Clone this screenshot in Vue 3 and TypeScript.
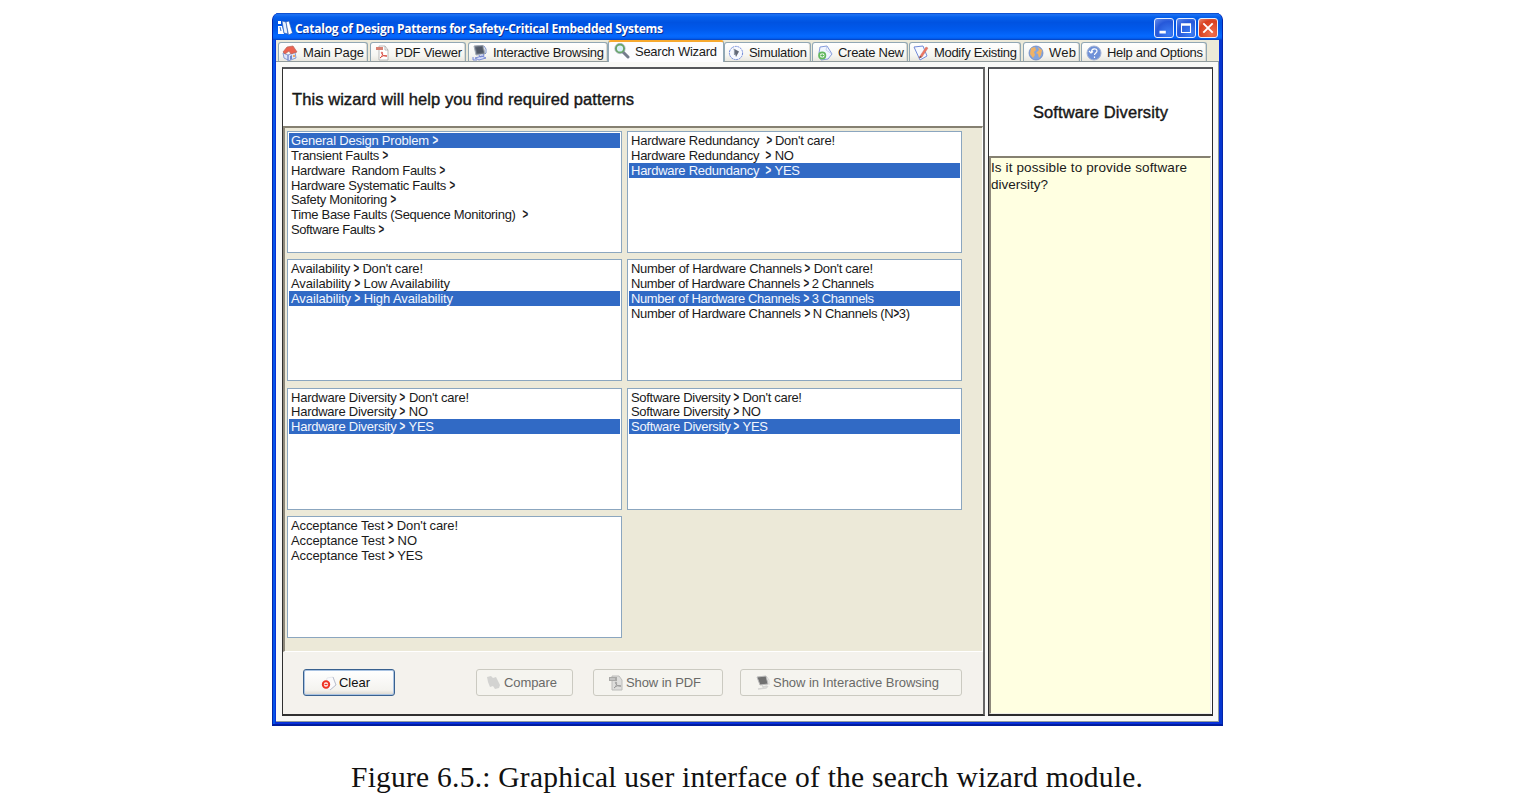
<script setup lang="ts">
interface Tab { label: string; icon: string; box: number; text: number; gap: number }
interface Row { text: string; w: number }
interface Choice { rows: Row[]; selected: number }

const tabs: Tab[] = [
  { label: 'Main Page', icon: 'home', box: 90, text: 61, gap: 2 },
  { label: 'PDF Viewer', icon: 'pdf', box: 96, text: 67, gap: 2 },
  { label: 'Interactive Browsing', icon: 'computer', box: 140, text: 111, gap: 0 },
  { label: 'Search Wizard', icon: 'search', box: 116, text: 82, gap: 0 },
  { label: 'Simulation', icon: 'play', box: 87, text: 58, gap: 1 },
  { label: 'Create New', icon: 'create', box: 96, text: 66, gap: 1 },
  { label: 'Modify Existing', icon: 'edit', box: 112, text: 83, gap: 2 },
  { label: 'Web', icon: 'web', box: 57, text: 27, gap: 1 },
  { label: 'Help and Options', icon: 'help', box: 126, text: 96, gap: 0 },
]

const row = (text: string, w: number): Row => ({ text, w })

const lists: Choice[] = [
  { selected: 0, rows: [row('General Design Problem >', 147), row('Transient Faults >', 97), row('Hardware  Random Faults >', 154), row('Hardware Systematic Faults >', 164), row('Safety Monitoring >', 105), row('Time Base Faults (Sequence Monitoring)  >', 237), row('Software Faults >', 93)] },
  { selected: 2, rows: [row("Hardware Redundancy  > Don't care!", 204), row('Hardware Redundancy  > NO', 163), row('Hardware Redundancy  > YES', 169)] },
  { selected: 2, rows: [row("Availability > Don't care!", 132), row('Availability > Low Availability', 159), row('Availability > High Availability', 162)] },
  { selected: 2, rows: [row("Number of Hardware Channels > Don't care!", 242), row('Number of Hardware Channels > 2 Channels', 243), row('Number of Hardware Channels > 3 Channels', 243), row('Number of Hardware Channels > N Channels (N>3)', 279)] },
  { selected: 2, rows: [row("Hardware Diversity > Don't care!", 178), row('Hardware Diversity > NO', 137), row('Hardware Diversity > YES', 143)] },
  { selected: 2, rows: [row("Software Diversity > Don't care!", 171), row('Software Diversity > NO', 130), row('Software Diversity > YES', 137)] },
  { selected: -1, rows: [row("Acceptance Test > Don't care!", 167), row('Acceptance Test > NO', 126), row('Acceptance Test > YES', 132)] },
]

const split = (text: string): string[] => text.split(/(>)/).filter((s) => s.length > 0)

// Adjusts tracking so that a label occupies the given width.
const vFit = {
  mounted(el: HTMLElement, binding: { value: number }) {
    const natural = el.getBoundingClientRect().width
    const count = (el.textContent ?? '').length
    if (count > 1) el.style.letterSpacing = `${(binding.value - natural) / (count - 1)}px`
  },
}
</script>

<template>
  <main class="page">
    <section class="window">
      <header class="titlebar">
        <svg class="app-icon" viewBox="0 0 16 16">
          <path d="M1 1h3v3H1zM1 6h4l2 8H1z" fill="#fff" />
          <path d="M5 1l4 1 2 12-4-1z" fill="#e8f2ff" stroke="#2757b0" stroke-width=".6" />
          <path d="M9 2l3-1 3.5 12-4 2z" fill="#fff" stroke="#2757b0" stroke-width=".6" />
          <path d="M3 7l1 4" stroke="#3a72c8" stroke-width="1" />
        </svg>
        <h1><span v-fit="368">Catalog of Design Patterns for Safety-Critical Embedded Systems</span></h1>
        <div class="controls">
          <button class="ctl"><svg viewBox="0 0 20 20"><path d="M5 13h7v3H5z" fill="#fff" /></svg></button>
          <button class="ctl"><svg viewBox="0 0 20 20"><path d="M5 6.5h10v8.5H5z" fill="none" stroke="#fff" stroke-width="1.2" /><path d="M4.4 4.7h11.2v2.6H4.4z" fill="#fff" /></svg></button>
          <button class="ctl close"><svg viewBox="0 0 20 20"><path d="M4.8 4.8l10.4 10.4M15.2 4.8L4.8 15.2" stroke="#fff" stroke-width="2.1" /></svg></button>
        </div>
      </header>

      <div class="client">
        <nav class="tabs">
          <div v-for="tab in tabs" :key="tab.label" class="tab" :class="{ active: tab.icon === 'search' }" :style="{ width: tab.box + 'px', marginRight: tab.gap + 'px' }">
            <svg class="icon" viewBox="0 0 16 16" fill="none">
              <g v-if="tab.icon === 'home'">
                <path d="M1 8l5 2v5l-4-2zM6 10l7-3 1 6-8 3z" fill="#dfe6fa" stroke="#7186c8" stroke-width=".8" />
                <path d="M1 7l4-5 6-1 4 6-6 2-2-3-4 3z" fill="#ec6350" stroke="#b5665c" stroke-width=".7" />
                <path d="M8 11l2-1v4l-2 1z" fill="#7388c8" /><path d="M11 10h2v2h-2z" fill="#f2aa61" />
              </g>
              <g v-else-if="tab.icon === 'pdf'">
                <path d="M5 1h6l3 4v10H5z" fill="#fff" stroke="#aaa" stroke-width=".8" />
                <path d="M11 1v4h3" stroke="#aaa" stroke-width=".8" /><path d="M2 2h7v3H2z" fill="#d88173" />
                <path d="M6 13c3-2 3-6 2-6-2 0 1 5 5 4-3-1-5 0-7 2z" stroke="#d54135" stroke-width=".9" />
              </g>
              <g v-else-if="tab.icon === 'computer'">
                <path d="M2 1l9-1 2 9-9 1z" fill="#69717d" stroke="#a4adb9" stroke-width="1" />
                <path d="M4 2.5l6-.7 1.3 5.7-6 .8z" fill="#505866" /><path d="M12 1l2 3v4l-1 1" stroke="#7d91cb" />
                <path d="M7 10l1 2 4-1-1-2M3 13l7-2 4 2-7 2zM1 12v3h4" stroke="#6f82cf" stroke-width=".9" fill="#d9e0fa" />
              </g>
              <g v-else-if="tab.icon === 'search'">
                <path d="M9 9l5 5" stroke="#747c8b" stroke-width="3" stroke-linecap="round" />
                <circle cx="6" cy="5.5" r="4.1" fill="#d7eefa" stroke="#68a668" stroke-width="2" />
                <circle cx="6" cy="5.5" r="5.2" stroke="#8792a5" stroke-width=".5" />
              </g>
              <g v-else-if="tab.icon === 'play'">
                <circle cx="8" cy="8" r="6.6" fill="#f7f9ff" stroke="#6e88d9" stroke-width="1" stroke-dasharray="2 .7" />
                <path d="M5.5 3.5l5.5 3-3 5.5z" fill="#626977" /><path d="M6.5 4v6" stroke="#9199a7" stroke-width="1.2" />
              </g>
              <g v-else-if="tab.icon === 'create'">
                <path d="M3 2l7-1 5 8-4 5-7 1-2-7z" fill="#f2f6ff" stroke="#7890d6" stroke-width=".9" />
                <path d="M10 1l-1 4 6 4" stroke="#aab8e3" stroke-width=".6" />
                <circle cx="5.2" cy="10.5" r="3.2" fill="#effaed" stroke="#62b85e" stroke-width="1.7" /><path d="M3.5 10.5h3.4M5.2 8.8v3.4" stroke="#62b85e" />
              </g>
              <g v-else-if="tab.icon === 'edit'">
                <path d="M1 2l9-1 4 10-7 4z" fill="#f8faff" stroke="#7189d7" stroke-width="1" />
                <path d="M7 11l6-9 2 1-6 9-3 1z" fill="#ee7360" stroke="#c87b6c" stroke-width=".5" /><path d="M7 11l1.8 1-2.5 1.2z" fill="#584c50" />
              </g>
              <g v-else-if="tab.icon === 'web'">
                <circle cx="8" cy="8" r="7" fill="#84a5df" stroke="#6681bd" stroke-width=".7" />
                <path d="M3 3l4-1 1 3-2 2 1 3-2 3-3-4zM10 2l4 3-1 5-2 3-1-4-2-1 3-3z" fill="#efb266" />
              </g>
              <g v-else>
                <circle cx="8" cy="8" r="7" fill="#6f91d8" stroke="#a3b2d4" stroke-width="1" />
                <path d="M5.5 7c0-4 5.5-4 5.5-1 0 2-2.5 2-2.5 4M8.5 11.5V13M3 6l2 2 2-1.500" stroke="#fff" stroke-width="1.2" />
              </g>
            </svg>
            <span class="tab-label" :style="{ width: tab.text + 'px' }"><span v-fit="tab.text">{{ tab.label }}</span></span>
          </div>
        </nav>

        <div class="pane">
          <section class="wizard">
            <h2 class="intro"><span v-fit="342">This wizard will help you find required patterns</span></h2>
            <div class="choices">
              <ul v-for="(list, li) in lists" :key="li" class="list">
                <li v-for="(r, ri) in list.rows" :key="ri" :class="{ selected: ri === list.selected }">
                  <span v-fit="r.w"><template v-for="(part, pi) in split(r.text)" :key="pi"><b v-if="part === '>'">{{ part }}</b><template v-else>{{ part }}</template></template></span>
                </li>
              </ul>
            </div>
            <footer class="actions">
              <button class="btn clear">
                <svg class="icon" viewBox="0 0 16 16" fill="none"><path d="M6 3l6-1 3 8-6 5-5-3z" fill="#fafafc" stroke="#dcdde4" stroke-width=".6" /><path d="M12 2l3 8-6 5" stroke="#bcc0cf" /><circle cx="5" cy="9.500" r="3.2" fill="#fff" stroke="#ee3425" stroke-width="2" /><path d="M3.500 9.500h3" stroke="#ee3425" stroke-width="1.4" /></svg>
                <span v-fit="31">Clear</span>
              </button>
              <button class="btn compare" disabled>
                <svg class="icon" viewBox="0 0 16 16"><path d="M1 2l4-1 2 2 3-1 4 8-1 3-4 1-2-3-3 1-2-5z" fill="#d3d3d1" /></svg>
                <span v-fit="53">Compare</span>
              </button>
              <button class="btn show-pdf" disabled>
                <svg class="icon" viewBox="0 0 16 16" fill="none"><path d="M4 1h7l3 4v10H4z" fill="#dededc" stroke="#bcbcba" /><path d="M1 2h8v4H1z" fill="#a9a9a7" /><path d="M2 4h5" stroke="#ddd" /><path d="M6 13c3-2 3-6 2-6-2 0 1 5 5 4-3-1-5 0-7 2z" stroke="#999" /></svg>
                <span v-fit="75">Show in PDF</span>
              </button>
              <button class="btn show-browse" disabled>
                <svg class="icon" viewBox="0 0 16 16" fill="none"><path d="M2 2l9-1 2 8-8 1z" fill="#707070" stroke="#bbb" /><path d="M12 2l2 3v5" stroke="#d5d5d3" /><path d="M7 10l1 2 4-1M3 14l8-1 2-2" stroke="#d5d5d3" stroke-width="1.4" /></svg>
                <span v-fit="166">Show in Interactive Browsing</span>
              </button>
            </footer>
          </section>

          <aside class="help">
            <h2><span v-fit="135">Software Diversity</span></h2>
            <p><span v-fit="196">Is it possible to provide software</span><br /><span v-fit="57">diversity?</span></p>
          </aside>
        </div>
      </div>
    </section>
    <p class="caption"><span v-fit="792">Figure 6.5.: Graphical user interface of the search wizard module.</span></p>
  </main>
</template>

<style>
body { margin: 0; background: #fff; }
</style>

<style scoped>
* { box-sizing: border-box; }
.page { width: 1518px; height: 801px; padding: 13px 0 0 272px; overflow: hidden; background: #fff; font: 13px/15px "Liberation Sans", Arial, sans-serif; color: #1a1a1a; }
h1, h2, p, ul { margin: 0; padding: 0; font-weight: normal; }
span { white-space: pre; }
button { padding: 0; font: inherit; color: inherit; }
.window { width: 951px; height: 713px; display: flex; flex-direction: column; background: #0831d9; border-radius: 7px 7px 0 0; border: 1px solid #0324a8; border-top: 0; border-bottom: 2px solid #001c9c; overflow: hidden; box-shadow: inset 2px 0 #0453e8, inset -2px 0 #0536d0; }
.titlebar { height: 27px; flex: none; display: flex; align-items: center; padding: 3px 4px 0 4px; background: linear-gradient(#0744c4 0, #1d72f4 6%, #0560ec 15%, #0053e1 35%, #0059ec 60%, #0569ff 85%, #0462f5 93%, #0440bf 100%); }
.app-icon { width: 16px; height: 16px; margin-right: 2px; }
h1 { flex: 1; font: bold 12px/16px "Open Sans", "Noto Sans", sans-serif; color: #fff; text-shadow: 1px 1px #0a2f94; padding-top: 1px; }
.controls { display: flex; gap: 2px; }
.ctl { width: 20px; height: 20px; border: 1px solid #e7efff; border-radius: 3px; background: radial-gradient(circle at 75% 80%, #3c7df4, #2658d9 60%, #648cec); display: flex; }
.ctl svg { width: 18px; height: 18px; }
.close { background: radial-gradient(circle at 70% 80%, #f0704e, #d8401f 65%, #e98c73); }
.client { flex: 1; min-height: 0; margin: 0 3px 2px; background: #ece9d8; display: flex; flex-direction: column; }
.tabs { height: 22px; flex: none; display: flex; align-items: flex-end; padding-left: 2px; border-bottom: 1px solid #919b9c; }
.tab { height: 19px; flex: none; display: flex; align-items: center; justify-content: flex-end; padding: 1px 3px 0 0; border: 1px solid #91a7b4; border-bottom: 0; border-radius: 3px 3px 0 0; background: linear-gradient(#fff, #f5f5f1 70%, #e9e7df); box-shadow: inset -1px 0 #dcdad1; }
.tab.active { height: 23px; margin-bottom: -2px; padding: 0 6px 3px 0; border-top: 2px solid #f7a92f; background: #fcfcfe; box-shadow: none; }
.icon { width: 16px; height: 16px; flex: none; }
.tab .icon { margin-right: 5px; }
.tab-label { display: block; flex: none; }
.pane { flex: 1; min-height: 0; display: flex; gap: 3px; padding: 5px 5px 5px 6px; background: #f8f8f6; border-right: 1px solid #919b9c; border-bottom: 1px solid #919b9c; }
.wizard { width: 703px; display: flex; flex-direction: column; border: 2px solid #303030; border-width: 2px 2px 2px 1px; border-top-color: #55565a; border-right-color: #666; background: #f4f2ed; }
.intro { height: 57px; flex: none; padding: 20px 0 0 9px; font-size: 16.5px; line-height: 20px; background: #fff; -webkit-text-stroke: .4px #111; }
.choices { height: 526px; flex: none; display: grid; grid-template-columns: 335px 335px; grid-auto-rows: 122px; gap: 6.3px 5px; align-content: start; padding: 3px 0 0 2px; background: #ece9d8; border-top: 2px solid #858071; border-left: 2px solid #8d887b; border-right: 1px solid #fff; border-bottom: 1px solid #fff; }
.list { border: 1px solid #8ba6bf; background: #fff; padding: 1px; list-style: none; }
li { height: 14.86px; line-height: 15px; padding-left: 2px; }
li b { display: inline-block; margin: 0 -1.5px; font-size: 15px; line-height: 1px; transform: scaleX(.65); }
.selected { background: #316ac5; color: #f3f6fd; }
.actions { flex: 1; display: flex; align-items: flex-start; padding: 17px 0 0 20px; }
.btn { height: 27px; display: flex; align-items: center; border: 1px solid #cbcac1; border-radius: 3px; background: #f5f4ef; color: #6a6a68; }
.btn .icon { margin-right: 2px; }
.clear { width: 92px; padding-left: 17px; color: #111; border-color: #39618f; background: linear-gradient(#fff, #f4f3ef 80%, #dad6cd); box-shadow: inset 0 0 0 1px #a9c3e2; }
.compare { width: 97px; margin-left: 81px; padding-left: 9px; }
.show-pdf { width: 130px; margin-left: 20px; padding-left: 14px; }
.show-browse { width: 222px; margin-left: 17px; padding-left: 14px; }
.help { width: 225px; margin-left: auto; display: flex; flex-direction: column; border: 2px solid #2b2b2e; border-width: 2px 1px 2px 1px; border-top-color: #55565a; background: #fff; }
.help h2 { height: 87px; flex: none; padding-top: 33px; font-size: 16.5px; line-height: 20px; text-align: center; -webkit-text-stroke: .4px #111; }
.help p { flex: 1; margin-right: 1px; padding: 1px 0 0; font-size: 13.5px; line-height: 17px; background: #ffffe1; border-top: 2px solid #858071; border-left: 2px solid #8d887b; border-right: 1px solid #efefe8; border-bottom: 1px solid #efefe8; }
.caption { padding: 34px 0 0 79px; font: 29.5px/34px "Liberation Serif", serif; color: #111; }
</style>
